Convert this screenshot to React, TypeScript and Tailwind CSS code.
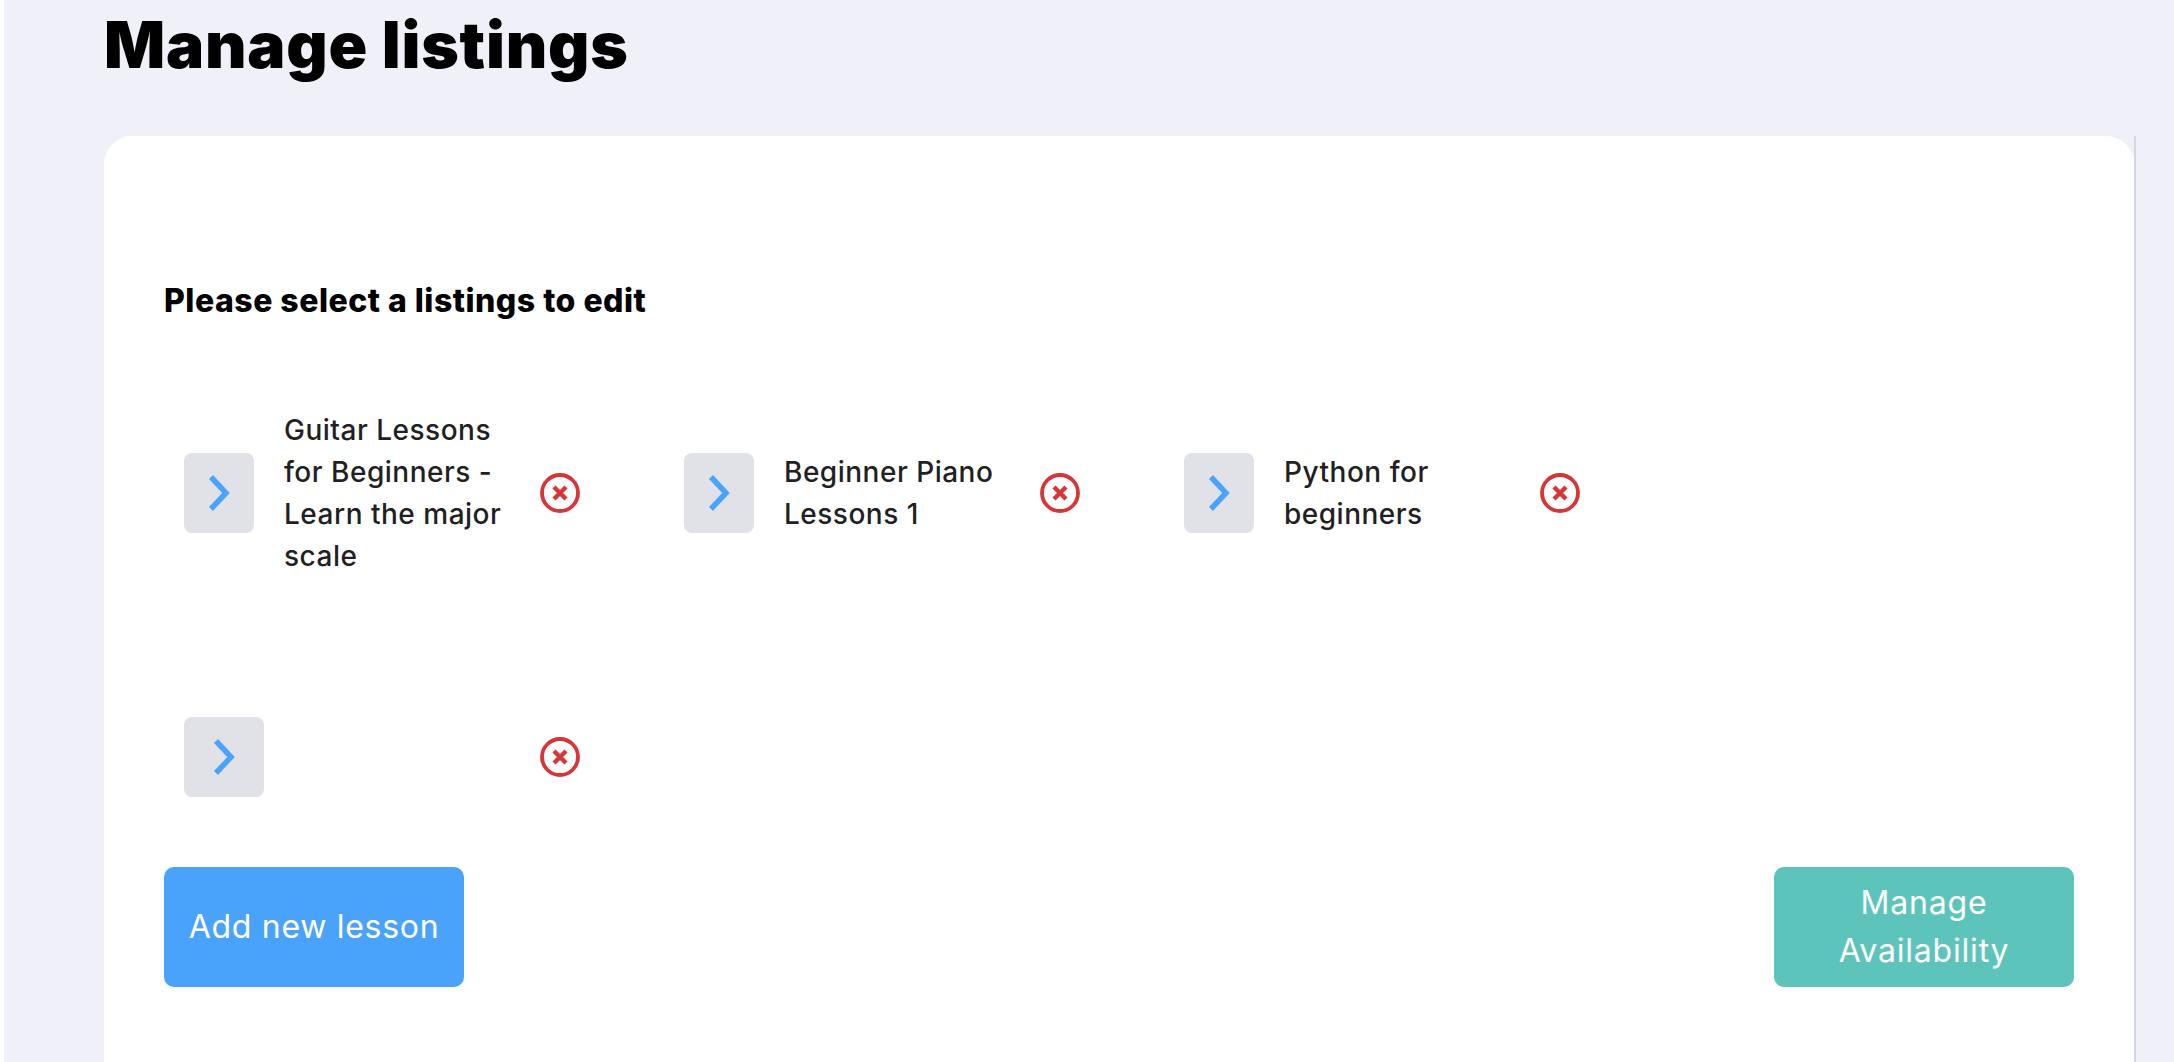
import React from 'react';

const listings = [
  'Guitar Lessons for Beginners - Learn the major scale',
  'Beginner Piano Lessons 1',
  'Python for beginners',
  '',
];

const Chevron = () => (
  <svg width="24" height="36" viewBox="0 0 24 36" fill="none">
    <polyline points="4,2 19,18 4,34" stroke="#4aa3fb" strokeWidth="5.5" />
  </svg>
);

const RemoveIcon = () => (
  <svg width="40" height="40" viewBox="0 0 40 40" fill="none" className="shrink-0">
    <circle cx="20" cy="20" r="18" stroke="#d63638" strokeWidth="3.8" />
    <path d="M14 14 L26 26 M26 14 L14 26" stroke="#d63638" strokeWidth="4.4" />
  </svg>
);

const ListingItem = ({ title }: { title: string }) => (
  <div className="flex items-center w-[396px]">
    <button className={`flex items-center justify-center shrink-0 h-20 rounded-lg bg-[#e1e2e8] ${title ? 'w-[70px]' : 'w-20'}`}>
      <Chevron />
    </button>
    <div className="flex-1 pl-[30px] pr-2 text-[28px] leading-[42px] font-medium tracking-[0.5px] text-[#1f1f24]">{title}</div>
    <RemoveIcon />
  </div>
);

export default function App() {
  return (
    <div className="h-[1062px] overflow-hidden bg-[#eff0f8] pl-[100px] pr-[38px] font-['Inter',sans-serif] border-l-[4px] border-white box-border">
      <h1 className="h-[136px] pt-[5px] text-[64px] leading-[80px] font-black text-black tracking-[0.8px]">Manage listings</h1>
      <div className="border-r-2 border-[#d5d6e0] h-[926px]">
        <div className="h-full rounded-t-[28px] bg-white px-[60px] pt-[144px]">
          <h2 className="text-[32px] leading-[42px] font-extrabold text-black tracking-[0.5px]">Please select a listings to edit</h2>
          <div className="grid grid-cols-[repeat(3,500px)] gap-y-[140px] pl-5 pt-[87px] items-center">
            {listings.map((title, i) => (
              <ListingItem key={i} title={title} />
            ))}
          </div>
          <div className="flex justify-between pt-[70px]">
            <button className="w-[300px] h-[120px] rounded-[10px] bg-[#4aa3fb] text-white text-[32px] leading-[48px] tracking-[0.7px]">Add new lesson</button>
            <button className="w-[300px] h-[120px] rounded-[10px] bg-[#5dc4bc] text-white text-[32px] leading-[48px] tracking-[0.8px]">
              Manage<br />Availability
            </button>
          </div>
        </div>
      </div>
    </div>
  );
}
